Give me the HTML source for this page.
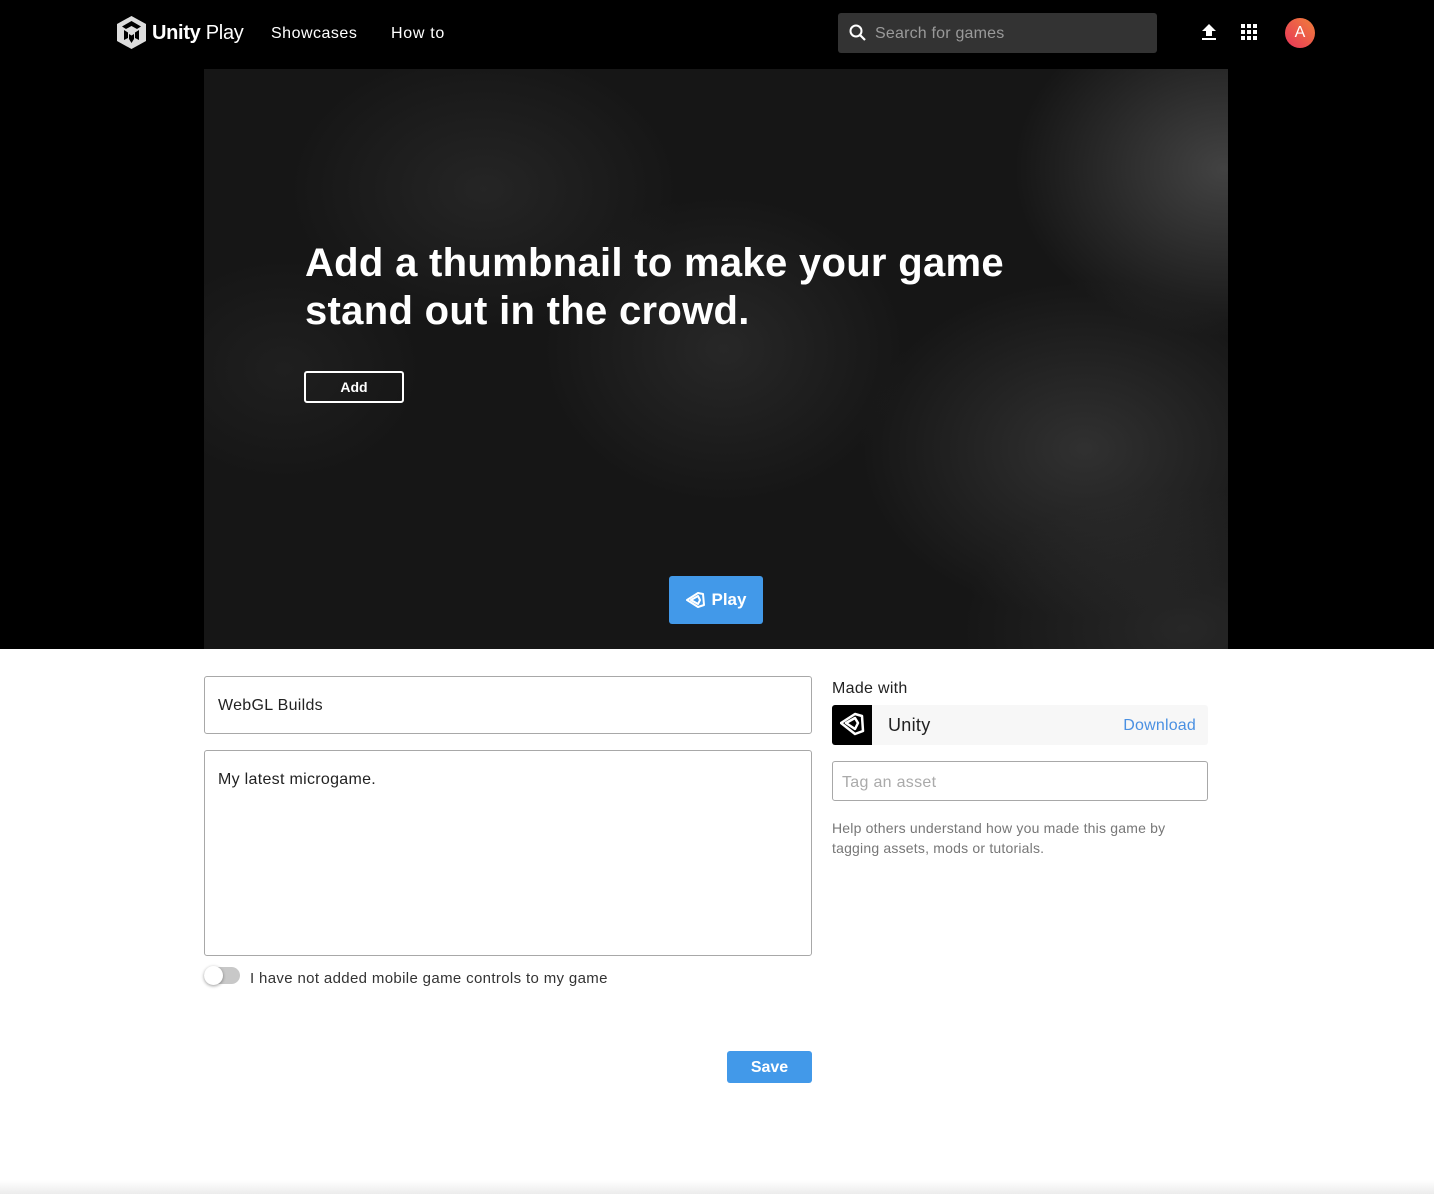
<!DOCTYPE html>
<html><head><meta charset="utf-8"><style>
*{box-sizing:border-box;margin:0;padding:0}
body{width:1434px;height:1194px;background:#fff;font-family:"Liberation Sans",sans-serif;position:relative;overflow:hidden}
.top{position:absolute;left:0;top:0;width:1434px;height:649px;background:#000}
.nav{position:absolute;top:0;left:0;width:1434px;height:68px}
.hero{position:absolute;left:204px;top:69px;width:1024px;height:580px;overflow:hidden;
background:
radial-gradient(ellipse 300px 240px at 1020px 100px,rgba(85,85,85,.7),transparent 70%),
radial-gradient(ellipse 320px 240px at 880px 380px,rgba(70,70,70,.55),transparent 70%),
radial-gradient(ellipse 260px 220px at 520px 280px,rgba(60,60,60,.45),transparent 70%),
radial-gradient(ellipse 280px 200px at 280px 120px,rgba(55,55,55,.45),transparent 70%),
radial-gradient(ellipse 320px 200px at 980px 560px,rgba(60,60,60,.45),transparent 70%),
radial-gradient(ellipse 200px 160px at 80px 300px,rgba(45,45,45,.4),transparent 70%),
#161616}
h1{position:absolute;left:101px;top:170px;color:#fff;font-size:40px;line-height:48px;font-weight:bold;letter-spacing:0.3px}
.add{position:absolute;left:100px;top:302px;width:100px;height:32px;border:2px solid #fff;border-radius:3px;color:#fff;font-size:14px;font-weight:bold;text-align:center;line-height:28px}
.play{position:absolute;left:465px;top:507px;width:94px;height:48px;background:#4299e9;border-radius:3px;color:#fff;font-weight:bold;font-size:17px;display:flex;align-items:center;justify-content:center;gap:6px}
.box{position:absolute;border:1px solid #a8a8a8;border-radius:3px;font-size:16px;color:#222}
</style></head><body>
<div class="top"></div>
<div class="nav">
 <svg style="position:absolute;left:116px;top:16px" width="31" height="33" viewBox="0 0 31 33"><path d="M15.5 0 L30 8 V25 L15.5 33 L1 25 V8 Z" fill="#ddd"/><path d="M15.5 5 L25 10.5 L21 13 L15.5 10 L10 13 L6 10.5 Z M8 14 L12 16.5 V22 L8 24 Z M23 14 V24 L19 22 V16.5 Z M13 18 L15.5 19.5 L18 18 V23 L15.5 27 L13 23Z" fill="#000"/></svg>
 <div style="position:absolute;left:152px;top:22px;color:#fff;font-size:20px;letter-spacing:-0.3px"><b>Unity</b> Play</div>
 <div style="position:absolute;left:271px;top:25px;color:#fff;font-size:16px;letter-spacing:0.5px">Showcases</div>
 <div style="position:absolute;left:391px;top:25px;color:#fff;font-size:16px;letter-spacing:0.7px">How to</div>
 <div style="position:absolute;left:838px;top:13px;width:319px;height:40px;background:#333;border-radius:3px">
  <svg style="position:absolute;left:10px;top:10px" width="20" height="20" viewBox="0 0 20 20"><circle cx="8" cy="8" r="5.5" stroke="#fff" stroke-width="2" fill="none"/><path d="M12 12 L17 17" stroke="#fff" stroke-width="2.2"/></svg>
  <div style="position:absolute;left:37px;top:12px;color:#9a9a9a;font-size:16px;letter-spacing:0.2px">Search for games</div>
 </div>
 <svg style="position:absolute;left:1200px;top:23px" width="18" height="18" viewBox="0 0 18 18"><path d="M9 1 L16 8 H12 V13 H6 V8 H2Z" fill="#fff"/><rect x="2" y="15" width="14" height="2" fill="#fff"/></svg>
 <svg style="position:absolute;left:1241px;top:24px" width="17" height="17" viewBox="0 0 17 17" fill="#fff"><rect x="0" y="0" width="4" height="4"/><rect x="6" y="0" width="4" height="4"/><rect x="12" y="0" width="4" height="4"/><rect x="0" y="6" width="4" height="4"/><rect x="6" y="6" width="4" height="4"/><rect x="12" y="6" width="4" height="4"/><rect x="0" y="12" width="4" height="4"/><rect x="6" y="12" width="4" height="4"/><rect x="12" y="12" width="4" height="4"/></svg>
 <div style="position:absolute;left:1285px;top:18px;width:30px;height:30px;border-radius:50%;background:linear-gradient(45deg,#e8345a,#f0803a);color:#fff;font-size:16px;text-align:center;line-height:30px">A</div>
</div>
<div class="hero">
 <h1>Add a thumbnail to make your game<br>stand out in the crowd.</h1>
 <div class="add">Add</div>
 <div class="play"><svg width="20" height="18" viewBox="0 0 20 18"><path d="M1 9 L12 2 L17 3 L18 14 L12 16Z M5 9 L12 5 L14 9 L12 13Z" fill="none" stroke="#fff" stroke-width="2" stroke-linejoin="round"/></svg>Play</div>
</div>
<div class="box" style="left:204px;top:676px;width:608px;height:58px;padding:20px 13px;letter-spacing:0.3px">WebGL Builds</div>
<div class="box" style="left:204px;top:750px;width:608px;height:206px;padding:20px 13px;letter-spacing:0.3px">My latest microgame.</div>
<div style="position:absolute;left:204px;top:967px;width:36px;height:17px;border-radius:9px;background:#c8c8c8"></div>
<div style="position:absolute;left:204px;top:966px;width:19px;height:19px;border-radius:50%;background:#fff;box-shadow:0 1px 3px rgba(0,0,0,.4)"></div>
<div style="position:absolute;left:250px;top:970px;font-size:15px;color:#333;letter-spacing:0.35px">I have not added mobile game controls to my game</div>
<div style="position:absolute;left:727px;top:1051px;width:85px;height:32px;background:#4299e9;border-radius:3px;color:#fff;font-weight:bold;font-size:16px;text-align:center;line-height:33px">Save</div>
<div style="position:absolute;left:832px;top:680px;font-size:16px;color:#222;letter-spacing:0.3px">Made with</div>
<div style="position:absolute;left:832px;top:705px;width:376px;height:40px;background:#f7f7f7;border-radius:3px">
 <div style="position:absolute;left:0;top:0;width:40px;height:40px;background:#000;border-radius:3px 0 0 3px">
  <svg style="position:absolute;left:8px;top:7px" width="25" height="24" viewBox="0 0 25 24"><path d="M1 11 L15 2 L22 4 L23 19 L15 22Z M6 11 L15 6 L18 11 L15 17Z" fill="none" stroke="#fff" stroke-width="2.5" stroke-linejoin="round"/></svg>
 </div>
 <div style="position:absolute;left:56px;top:10px;font-size:18px;color:#222;letter-spacing:0.3px">Unity</div>
 <div style="position:absolute;right:12px;top:12px;font-size:16px;color:#4a90e2;letter-spacing:0.2px">Download</div>
</div>
<div class="box" style="left:832px;top:761px;width:376px;height:40px;padding:12px 9px;color:#aaa;letter-spacing:0.3px">Tag an asset</div>
<div style="position:absolute;left:832px;top:818px;width:355px;font-size:14px;line-height:20px;color:#777;letter-spacing:0.2px">Help others understand how you made this game by tagging assets, mods or tutorials.</div>
<div style="position:absolute;left:0;top:1180px;width:1434px;height:14px;background:linear-gradient(#fff,#ececec)"></div>
</body></html>
